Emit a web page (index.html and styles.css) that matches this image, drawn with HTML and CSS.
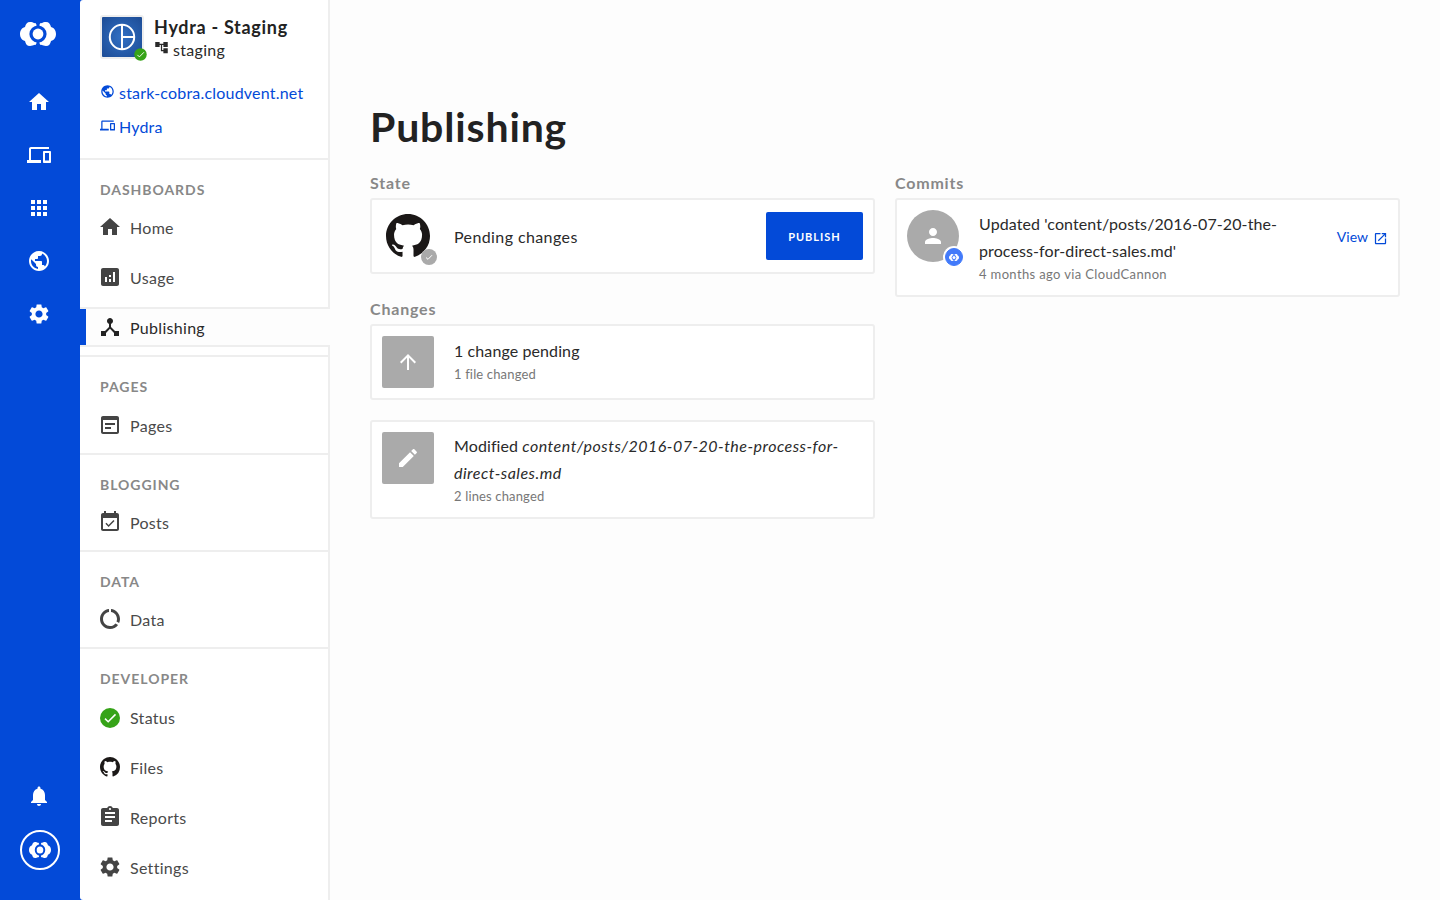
FILE: index.html
```html
<!DOCTYPE html>
<html lang="en">
<head>
<meta charset="utf-8">
<title>Publishing</title>
<link rel="stylesheet" href="styles.css">
</head>
<body>
<svg class="defs" aria-hidden="true">
  <symbol id="logo" viewBox="0 0 36 24" preserveAspectRatio="none"><path d="M16.500 3.500C16.500 1.500 15.500.6 14.500 1.200 13 .5 12 0 10 0 7 0 5.700 2 5 5 1.500 6 0 9 0 12s1.500 6 5 7c.7 3 2 5 5 5 2 0 3-.5 4.500-1.200 1 .6 2-.3 2-2.300zM19.500 3.500c0-2 1-2.900 2-2.300C23 .5 24 0 26 0c3 0 4.300 2 5 5 3.500 1 5 4 5 7s-1.500 6-5 7c-.7 3-2 5-5 5-2 0-3-.5-4.500-1.200-1 .6-2-.3-2-2.300z"/><circle class="logo-ring" cx="18" cy="12" r="8.600"/><circle cx="18" cy="12" r="5.400"/></symbol>
  <symbol id="home" viewBox="0 0 24 24"><path d="M10 20v-6h4v6h5v-8h3L12 3 2 12h3v8z"/></symbol>
  <symbol id="devices" viewBox="0 0 24 24"><path d="M4 6h18V4H4c-1.100 0-2 .9-2 2v11H0v3h14v-3H4V6zm19 2h-6c-.55 0-1 .45-1 1v10c0 .55.45 1 1 1h6c.55 0 1-.45 1-1V9c0-.55-.45-1-1-1zm-1 9.500h-4v-7.500h4v7.500z"/></symbol>
  <symbol id="apps" viewBox="0 0 24 24"><path d="M4 8h4V4H4v4zm6 12h4v-4h-4v4zm-6 0h4v-4H4v4zm0-6h4v-4H4v4zm6 0h4v-4h-4v4zm6-10v4h4V4h-4zm-6 4h4V4h-4v4zm6 6h4v-4h-4v4zm0 6h4v-4h-4v4z"/></symbol>
  <symbol id="globe" viewBox="0 0 24 24"><path d="M12 2C6.480 2 2 6.480 2 12s4.480 10 10 10 10-4.480 10-10S17.520 2 12 2zm-1 17.930c-3.950-.49-7-3.850-7-7.930 0-.62.08-1.210.21-1.790L9 15v1c0 1.100.9 2 2 2v1.930zm6.900-2.540c-.26-.81-1-1.390-1.900-1.390h-1v-3c0-.55-.45-1-1-1H8v-2h2c.55 0 1-.45 1-1V7h2c1.100 0 2-.9 2-2v-.41c2.930 1.190 5 4.060 5 7.410 0 2.080-.8 3.970-2.100 5.390z"/></symbol>
  <symbol id="gear" viewBox="0 0 24 24"><path d="M19.140 12.940c.04-.3.06-.61.06-.94 0-.32-.02-.64-.07-.94l2.030-1.580c.18-.14.23-.41.12-.61l-1.920-3.320c-.12-.22-.37-.29-.59-.22l-2.390.96c-.5-.38-1.030-.7-1.620-.94l-.36-2.540c-.04-.24-.24-.41-.48-.41h-3.840c-.24 0-.43.17-.47.41l-.36 2.540c-.59.24-1.130.57-1.620.94l-2.390-.96c-.22-.08-.47 0-.59.22L2.740 8.870c-.12.21-.08.47.12.61l2.030 1.580c-.05.3-.09.63-.09.94s.02.64.07.94l-2.030 1.580c-.18.14-.23.41-.12.61l1.920 3.320c.12.22.37.29.59.22l2.390-.96c.5.38 1.030.7 1.620.94l.36 2.540c.05.24.24.41.48.41h3.840c.24 0 .44-.17.47-.41l.36-2.540c.59-.24 1.130-.56 1.620-.94l2.390.96c.22.08.47 0 .59-.22l1.920-3.320c.12-.22.07-.47-.12-.61l-2.010-1.580zM12 15.600c-1.980 0-3.600-1.620-3.600-3.600s1.620-3.600 3.600-3.600 3.600 1.620 3.600 3.600-1.620 3.600-3.600 3.600z"/></symbol>
  <symbol id="bell" viewBox="0 0 24 24"><path d="M12 22c1.100 0 2-.9 2-2h-4c0 1.100.89 2 2 2zm6-6v-5c0-3.070-1.640-5.640-4.500-6.320V4c0-.83-.67-1.500-1.500-1.500s-1.500.67-1.500 1.500v.68C7.630 5.360 6 7.920 6 11v5l-2 2v1h16v-1l-2-2z"/></symbol>
  <symbol id="tree" viewBox="0 0 24 24"><path d="M22 11V3h-7v3H9V3H2v8h7V8h2v10h4v3h7v-8h-7v3h-2V8h2v3z"/></symbol>
  <symbol id="usage" viewBox="0 0 24 24"><path d="M19 3H5c-1.100 0-2 .9-2 2v14c0 1.100.9 2 2 2h14c1.100 0 2-.9 2-2V5c0-1.100-.9-2-2-2zM9 17H7v-5h2v5zm4 0h-2v-3h2v3zm0-5h-2v-2h2v2zm4 5h-2V7h2v10z"/></symbol>
  <symbol id="hub" viewBox="0 0 24 24"><path d="M17 16l-4-4V8.820C14.160 8.400 15 7.300 15 6c0-1.660-1.340-3-3-3S9 4.340 9 6c0 1.300.84 2.400 2 2.820V12l-4 4H3v5h5v-3.050l4-4.200 4 4.200V21h5v-5h-4z"/></symbol>
  <symbol id="page" viewBox="0 0 24 24"><path d="M19 3H5c-1.100 0-2 .9-2 2v14c0 1.100.9 2 2 2h14c1.100 0 2-.9 2-2V5c0-1.100-.9-2-2-2zm0 16H5V7h14v12zM17 12H7v-2h10v2zm-4 4H7v-2h6v2z"/></symbol>
  <symbol id="event" viewBox="0 0 24 24"><path d="M16.530 11.060L15.470 10l-4.880 4.880-2.120-2.120-1.060 1.060L10.590 17l5.940-5.940zM19 3h-1V1h-2v2H8V1H6v2H5c-1.110 0-1.990.9-1.990 2L3 19c0 1.100.89 2 2 2h14c1.100 0 2-.9 2-2V5c0-1.100-.9-2-2-2zm0 16H5V8h14v11z"/></symbol>
  <symbol id="data" viewBox="0 0 24 24"><path d="M13 2.050v3.030c3.390.49 6 3.390 6 6.920 0 .9-.18 1.750-.48 2.540l2.600 1.530c.56-1.240.88-2.620.88-4.070 0-5.180-3.950-9.450-9-9.950zM12 19c-3.870 0-7-3.130-7-7 0-3.530 2.610-6.430 6-6.920V2.050c-5.060.5-9 4.760-9 9.950 0 5.520 4.470 10 9.990 10 3.310 0 6.240-1.610 8.060-4.090l-2.600-1.530C16.170 17.980 14.210 19 12 19z"/></symbol>
  <symbol id="check" viewBox="0 0 24 24"><circle cx="12" cy="12" r="10"/><path class="tick" d="M7 12.600l3.200 3.200 7.300-7.400"/></symbol>
  <symbol id="check-small" viewBox="0 0 24 24"><circle cx="12" cy="12" r="12"/><path class="tick" d="M7.500 12.800l3 2.700 6-6.200"/></symbol>
  <symbol id="github" viewBox="0 0 16 16"><path d="M8 0C3.580 0 0 3.580 0 8c0 3.540 2.290 6.530 5.470 7.590.4.07.55-.17.55-.38 0-.19-.01-.82-.01-1.490-2.010.37-2.530-.49-2.690-.94-.09-.23-.48-.94-.82-1.130-.28-.15-.68-.52-.01-.53.63-.01 1.080.58 1.230.82.72 1.210 1.870.87 2.330.66.07-.52.28-.87.51-1.070-1.780-.2-3.640-.89-3.640-3.950 0-.87.31-1.590.82-2.150-.08-.2-.36-1.020.08-2.120 0 0 .67-.21 2.200.82.64-.18 1.320-.27 2-.27s1.360.09 2 .27c1.530-1.040 2.200-.82 2.200-.82.44 1.100.16 1.920.08 2.120.51.56.82 1.270.82 2.150 0 3.070-1.870 3.750-3.650 3.950.29.25.54.73.54 1.480 0 1.070-.01 1.930-.01 2.200 0 .21.15.46.55.38A8.010 8.010 0 0 0 16 8c0-4.420-3.580-8-8-8z"/></symbol>
  <symbol id="report" viewBox="0 0 24 24"><path d="M19 3h-4.180C14.400 1.840 13.300 1 12 1c-1.300 0-2.400.84-2.820 2H5c-1.100 0-2 .9-2 2v14c0 1.100.9 2 2 2h14c1.100 0 2-.9 2-2V5c0-1.100-.9-2-2-2zm-7 0c.55 0 1 .45 1 1s-.45 1-1 1-1-.45-1-1 .45-1 1-1zm2 14H7v-2h7v2zm3-4H7v-2h10v2zm0-4H7V7h10v2z"/></symbol>
  <symbol id="up" viewBox="0 0 24 24"><path d="M4 12l1.410 1.410L11 7.830V20h2V7.830l5.580 5.590L20 12l-8-8-8 8z"/></symbol>
  <symbol id="edit" viewBox="0 0 24 24"><path d="M3 17.250V21h3.750L17.810 9.940l-3.750-3.750L3 17.250zM20.710 7.040c.39-.39.39-1.020 0-1.410l-2.340-2.340c-.39-.39-1.020-.39-1.410 0l-1.830 1.830 3.750 3.750 1.830-1.830z"/></symbol>
  <symbol id="person" viewBox="0 0 24 24"><path d="M12 12c2.210 0 4-1.790 4-4s-1.790-4-4-4-4 1.790-4 4 1.790 4 4 4zm0 2c-2.670 0-8 1.340-8 4v2h16v-2c0-2.660-5.330-4-8-4z"/></symbol>
  <symbol id="open" viewBox="0 0 24 24"><path d="M19 19H5V5h7V3H5c-1.110 0-2 .9-2 2v14c0 1.100.89 2 2 2h14c1.100 0 2-.9 2-2v-7h-2v7zM14 3v2h3.590l-9.830 9.830 1.410 1.410L19 6.410V10h2V3h-7z"/></symbol>
</svg>

<div class="app">
  <nav class="rail">
    <svg class="rail-logo"><use href="#logo"/></svg>
    <div class="rail-links">
      <svg class="icon"><use href="#home"/></svg>
      <svg class="icon"><use href="#devices"/></svg>
      <svg class="icon"><use href="#apps"/></svg>
      <svg class="icon"><use href="#globe"/></svg>
      <svg class="icon"><use href="#gear"/></svg>
    </div>
    <svg class="icon rail-bell"><use href="#bell"/></svg>
    <div class="rail-avatar"><svg><use href="#logo"/></svg></div>
  </nav>

  <aside class="sidebar">
    <header class="site">
      <div class="site-top">
        <div class="site-thumb">
          <svg class="thumb-mark" viewBox="0 0 28 28"><circle cx="14" cy="14" r="12.200"/><path d="M14 2v24M14 14h12"/></svg>
          <svg class="thumb-badge"><use href="#check"/></svg>
        </div>
        <div>
          <div class="site-name">Hydra - Staging</div>
          <div class="branch"><svg><use href="#tree"/></svg><span>staging</span></div>
        </div>
      </div>
      <a class="site-link domain"><svg><use href="#globe"/></svg><span>stark-cobra.cloudvent.net</span></a>
      <a class="site-link"><svg><use href="#devices"/></svg><span>Hydra</span></a>
    </header>

    <section class="group">
      <h2>DASHBOARDS</h2>
      <a class="item"><svg class="icon"><use href="#home"/></svg><span>Home</span></a>
      <a class="item"><svg class="icon"><use href="#usage"/></svg><span>Usage</span></a>
      <a class="item active"><svg class="icon"><use href="#hub"/></svg><span>Publishing</span></a>
    </section>
    <section class="group">
      <h2>PAGES</h2>
      <a class="item"><svg class="icon"><use href="#page"/></svg><span>Pages</span></a>
    </section>
    <section class="group">
      <h2>BLOGGING</h2>
      <a class="item"><svg class="icon"><use href="#event"/></svg><span>Posts</span></a>
    </section>
    <section class="group">
      <h2>DATA</h2>
      <a class="item"><svg class="icon"><use href="#data"/></svg><span>Data</span></a>
    </section>
    <section class="group last">
      <h2>DEVELOPER</h2>
      <a class="item"><svg class="icon green"><use href="#check"/></svg><span>Status</span></a>
      <a class="item"><svg class="icon github"><use href="#github"/></svg><span>Files</span></a>
      <a class="item"><svg class="icon"><use href="#report"/></svg><span>Reports</span></a>
      <a class="item"><svg class="icon"><use href="#gear"/></svg><span>Settings</span></a>
    </section>
  </aside>

  <main class="main">
    <h1>Publishing</h1>
    <div class="columns">
      <div class="column">
        <h3>State</h3>
        <div class="card">
          <div class="tile plain"><svg class="mark"><use href="#github"/></svg><svg class="badge gray"><use href="#check-small"/></svg></div>
          <div class="body state"><p>Pending changes</p></div>
          <button class="publish">PUBLISH</button>
        </div>
        <h3 class="second">Changes</h3>
        <div class="card">
          <div class="tile"><svg class="icon"><use href="#up"/></svg></div>
          <div class="body raised"><p>1 change pending</p><small>1 file changed</small></div>
        </div>
        <div class="card">
          <div class="tile"><svg class="icon"><use href="#edit"/></svg></div>
          <div class="body"><p>Modified <em>content/posts/2016-07-20-the-process-for-<br>direct-sales.md</em></p><small>2 lines changed</small></div>
        </div>
      </div>
      <div class="column">
        <h3>Commits</h3>
        <div class="card">
          <div class="tile round"><svg class="icon"><use href="#person"/></svg><div class="badge blue"><svg><use href="#logo"/></svg></div></div>
          <div class="body commit"><p>Updated 'content/posts/2016-07-20-the-<br>process-for-direct-sales.md'</p><small>4 months ago via CloudCannon</small></div>
          <a class="view"><span>View</span><svg><use href="#open"/></svg></a>
        </div>
      </div>
    </div>
  </main>
</div>
</body>
</html>
```

FILE: styles.css
```css
* { box-sizing: border-box; }
body { margin: 0; background: #034ad8; font: 400 16px/27px Lato, sans-serif; color: #2a2a2a; overflow: hidden; }
h1, h2, h3, p { margin: 0; }
svg { display: block; fill: currentColor; flex: none; }
.defs { position: absolute; width: 0; height: 0; }
.icon { width: 24px; height: 24px; }
.logo-ring { fill: var(--ring, #034ad8); }
.tick { fill: none; stroke: #fff; stroke-width: 1.500; }

.app { display: flex; height: 900px; }
.rail { width: 80px; flex: none; background: #034ad8; color: #fff; display: flex; flex-direction: column; padding: 22px 0 30px 20px; }
.rail-logo { width: 36px; height: 24px; }
.rail-links { display: flex; flex-direction: column; gap: 29px; padding: 44px 0 0 7px; flex: 1; }
.rail-bell { margin-left: 7px; }
.rail-avatar { width: 40px; height: 40px; margin-top: 22px; border: 2px solid #fff; border-radius: 50%; display: grid; place-items: center; }
.rail-avatar svg { width: 22px; height: 16px; }

.sidebar { width: 250px; flex: none; background: #fff; border-right: 2px solid #eee; border-radius: 3px 0 0 3px; }
.site { height: 160px; border-bottom: 2px solid #eee; padding: 15px 0 0 20px; }
.site-top { display: flex; gap: 10px; height: 61px; }
.site-thumb { position: relative; width: 44px; height: 44px; border: 2px solid #eee; border-radius: 3px; background: radial-gradient(#3270c4, #1c4b94); display: grid; place-items: center; }
.thumb-mark { width: 28px; height: 28px; fill: none; stroke: #fff; stroke-width: 2; }
.thumb-badge { position: absolute; right: -5.500px; bottom: -4.500px; width: 15px; height: 15px; color: #36a318; }
.site-name { color: #222; font-size: 18px; font-weight: 700; line-height: 24px; white-space: nowrap; letter-spacing: .7px; }
.branch { display: flex; gap: 4px; line-height: 21px; letter-spacing: .3px; }
.branch svg { width: 15px; height: 15px; margin-top: 1px; }
.site-link { display: flex; gap: 4px; height: 34px; line-height: 34px; color: #034ad8; letter-spacing: .2px; }
.site-link svg { width: 15px; height: 15px; margin-top: 8px; }

.group { border-bottom: 2px solid #eee; padding-bottom: 8px; display: flex; flex-direction: column; gap: 10px; }
.group.last { border: 0; }
.group h2 { height: 37.330px; padding: 18px 0 0 20px; font-size: 14px; line-height: 23.500px; color: #888; letter-spacing: .95px; }
.item { display: flex; align-items: center; gap: 8px; height: 40px; padding: 0 0 0 18px; color: #444; letter-spacing: .3px; }
.item span { padding-top: 1px; color: #4a4a4a; }
.item.active { margin-right: -2px; background: #fdfdfd; color: #222; border: solid #eee; border-width: 2px 0; box-shadow: inset 6px 0 #034ad8; }
.item.active span { color: #2a2a2a; }
.icon.green { color: #36a318; margin-top: 2px; }
.icon.github { width: 20px; height: 20px; margin: 0 2px; color: #1b1817; }

.main { flex: 1; background: #fdfdfd; padding: 99px 40px 0; }
h1 { color: #222; font-size: 41px; line-height: 56px; height: 72px; font-weight: 700; letter-spacing: .85px; }
.columns { display: grid; grid-template-columns: 505px 505px; gap: 20px; }
h3 { font-size: 16px; line-height: 24px; margin-bottom: 3px; color: #888; letter-spacing: .8px; }
h3.second { margin-top: 23px; }
.card { display: flex; align-items: center; background: #fff; border: 2px solid #eee; border-radius: 3px; padding: 10px; min-height: 76px; }
.card + .card { margin-top: 20px; }
.tile { position: relative; width: 52px; height: 52px; margin-right: 20px; flex: none; align-self: flex-start; background: #aaa; color: #fff; border-radius: 2px; display: grid; place-items: center; }
.tile.round { border-radius: 50%; }
.tile.plain { background: none; color: #1b1817; }
.mark { width: 44px; height: 44px; }
.badge { position: absolute; right: -4px; bottom: -4px; width: 18px; height: 18px; }
.badge.gray { width: 16px; height: 16px; color: #aaa; right: -3px; bottom: -3px; }
.badge.blue { --ring: #427afa; background: #427afa; border-radius: 50%; box-shadow: 0 0 0 2px #fff; display: grid; place-items: center; color: #fff; border: 1px solid #427afa; }
.badge.blue svg { width: 10px; height: 7px; }
.body { flex: 1; white-space: nowrap; letter-spacing: .1px; }
.body.state { letter-spacing: .4px; }
.body em { letter-spacing: .49px; }
.raised { padding-bottom: 2px; }
.body small { display: block; font-size: 13px; line-height: 21px; color: #777; letter-spacing: .15px; }
.body.commit small { letter-spacing: .36px; }
.publish { width: 97px; height: 48px; border: 0; border-radius: 2px; background: #034ad8; color: #fff; font: 700 11px Lato, sans-serif; letter-spacing: 1px; }
.view { display: flex; align-items: center; align-self: flex-start; height: 53px; gap: 5px; color: #034ad8; font-size: 14px; }
.view svg { width: 15px; height: 15px; margin-top: 3px; }
```
